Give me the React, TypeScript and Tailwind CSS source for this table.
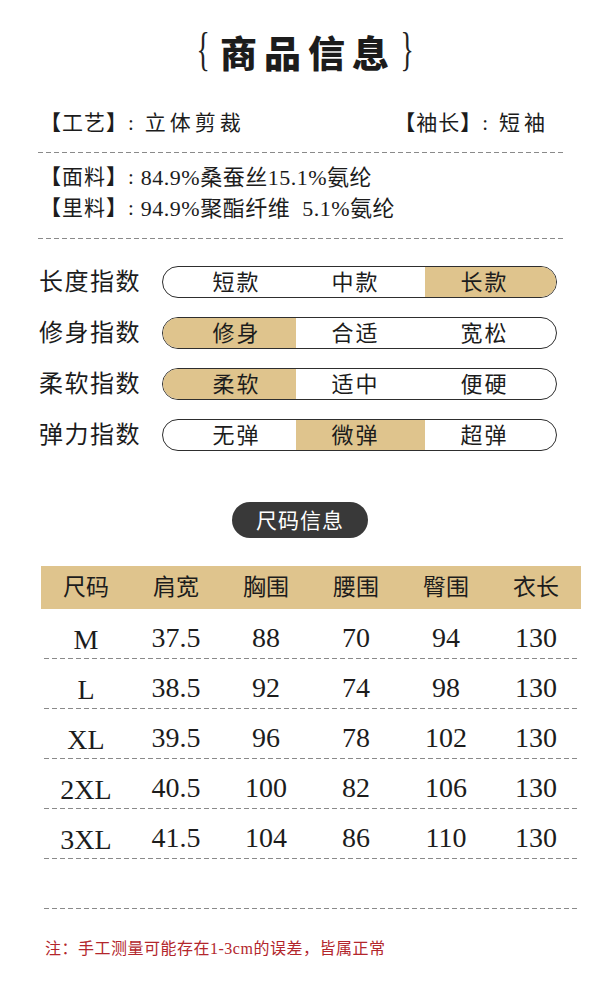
const serif = "font-['Liberation_Serif','Noto_Sans_CJK_SC',serif]";

function Dash({ className = "" }: { className?: string }) {
  return (
    <div
      className={`h-px bg-[linear-gradient(to_right,#8a8a8a_62%,transparent_0)] bg-[length:8px_1px] bg-repeat-x ${className}`}
    />
  );
}

const indexRows = [
  { label: "长度指数", opts: ["短款", "中款", "长款"], pick: 2 },
  { label: "修身指数", opts: ["修身", "合适", "宽松"], pick: 0 },
  { label: "柔软指数", opts: ["柔软", "适中", "便硬"], pick: 0 },
  { label: "弹力指数", opts: ["无弹", "微弹", "超弹"], pick: 1 },
];

// text sits a little off-centre in each third of the pill
const segPad = ["pl-[14px]", "pr-[10px]", "pr-[12px]"];

const headers = ["尺码", "肩宽", "胸围", "腰围", "臀围", "衣长"];

const sizes = [
  ["M", "37.5", "88", "70", "94", "130"],
  ["L", "38.5", "92", "74", "98", "130"],
  ["XL", "39.5", "96", "78", "102", "130"],
  ["2XL", "40.5", "100", "82", "106", "130"],
  ["3XL", "41.5", "104", "86", "110", "130"],
];

export default function App() {
  return (
    <div className={`w-[610px] h-[1000px] bg-white text-[#1c1c1c] ${serif}`}>
      {/* title */}
      <div className="h-[104px] flex items-center justify-center">
        <span className="text-[46px] font-light leading-none text-[#222] scale-x-[0.6] -mt-1">{"{"}</span>
        <span className="font-['Noto_Sans_CJK_SC',sans-serif] font-black text-[37px] tracking-[7px] leading-none ml-[6px]">
          商品信息
        </span>
        <span className="text-[46px] font-light leading-none text-[#222] scale-x-[0.6] -mt-1">{"}"}</span>
      </div>

      {/* craft / fabric */}
      <div className="ml-[38px] w-[527px]">
        <div className="h-[40px] flex items-center justify-between text-[21px] px-[2px]">
          <span className="flex items-center">
            <span className="tracking-[1px]">
              <span className="font-bold">【</span>工艺<span className="font-bold">】</span>:
            </span>
            <span className="ml-[10px] tracking-[4px]">立体剪裁</span>
          </span>
          <span className="flex items-center mr-[14px]">
            <span className="tracking-[1px]">
              <span className="font-bold">【</span>袖长<span className="font-bold">】</span>:
            </span>
            <span className="ml-[10px] tracking-[4px]">短袖</span>
          </span>
        </div>
        <Dash className="mt-[8px]" />
        <div className="pt-[9px] text-[21px] px-[2px]">
          <div className="h-[31px] flex items-center">
            <span className="tracking-[1px]">
              <span className="font-bold">【</span>面料<span className="font-bold">】</span>:
            </span>
            <span className="ml-[6px] text-[22px] tracking-[0.5px]">84.9%桑蚕丝15.1%氨纶</span>
          </div>
          <div className="h-[31px] flex items-center">
            <span className="tracking-[1px]">
              <span className="font-bold">【</span>里料<span className="font-bold">】</span>:
            </span>
            <span className="ml-[6px] text-[22px] tracking-[0.5px]">94.9%聚酯纤维&nbsp;&nbsp;5.1%氨纶</span>
          </div>
        </div>
        <Dash className="mt-[14px]" />
      </div>

      {/* indices */}
      <div className="mt-[27px] flex flex-col gap-[19px]">
        {indexRows.map((r) => (
          <div key={r.label} className="flex items-center h-[32px]">
            <span className="ml-[39px] w-[123px] text-[24px] tracking-[1.5px]">{r.label}</span>
            <div className="w-[395px] h-[32px] rounded-full border-[1.5px] border-[#2e2e2e] overflow-hidden flex">
              {r.opts.map((o, i) => (
                <div
                  key={o}
                  className={`flex-1 flex items-center justify-center text-[22px] tracking-[2px] ${segPad[i]} ${
                    i === r.pick ? "bg-[#dfc48d]" : ""
                  }`}
                >
                  {o}
                </div>
              ))}
            </div>
          </div>
        ))}
      </div>

      {/* size title */}
      <div className="mt-[51px] flex justify-center">
        <div className="w-[136px] h-[36px] rounded-full bg-[#393939] text-white text-[21px] tracking-[1px] flex items-center justify-center font-['Noto_Sans_CJK_SC',sans-serif] -ml-[10px]">
          尺码信息
        </div>
      </div>

      {/* table */}
      <div className="mt-[28px] ml-[41px] w-[540px]">
        <div className="h-[43px] bg-[#dfc48d] grid grid-cols-6">
          {headers.map((h) => (
            <div key={h} className="flex items-center justify-center text-[23px] pt-[2px]">
              {h}
            </div>
          ))}
        </div>
        {sizes.map((row) => (
          <div key={row[0]}>
            <div className="h-[49px] grid grid-cols-6 pt-[6px]">
              {row.map((c, i) => (
                <div key={i} className={`flex items-center justify-center text-[28px] ${i === 0 ? "pt-[4px]" : ""}`}>
                  {c}
                </div>
              ))}
            </div>
            <Dash className="ml-[3px] w-[536px]" />
          </div>
        ))}
        <div className="h-[49px]" />
        <Dash className="ml-[3px] w-[536px]" />
      </div>

      {/* note */}
      <div className="mt-[28px] ml-[45px] h-[24px] flex items-center text-[16px] text-[#b3262c] tracking-[0.5px]">
        注：手工测量可能存在1-3cm的误差，皆属正常
      </div>
    </div>
  );
}
